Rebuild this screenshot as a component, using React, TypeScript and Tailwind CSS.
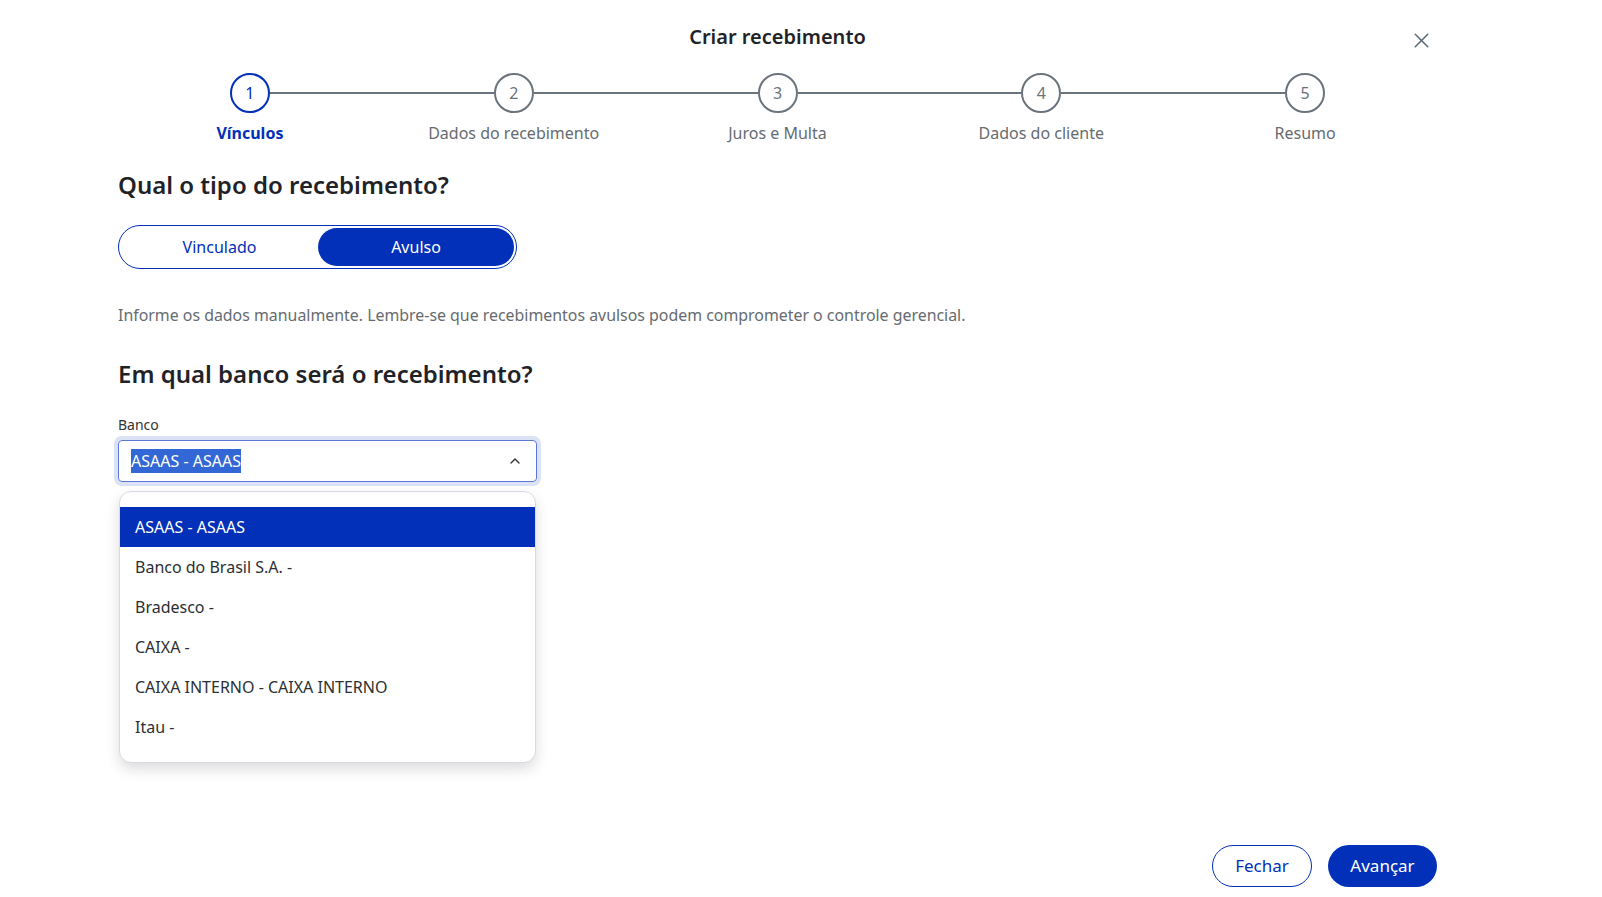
import React from "react";
import { X, ChevronUp } from "lucide-react";

const steps = [
  "Vínculos",
  "Dados do recebimento",
  "Juros e Multa",
  "Dados do cliente",
  "Resumo",
];

const banks = [
  "ASAAS - ASAAS",
  "Banco do Brasil S.A. -",
  "Bradesco -",
  "CAIXA -",
  "CAIXA INTERNO - CAIXA INTERNO",
  "Itau -",
];

function Stepper({ current }: { current: number }) {
  return (
    <div className="grid grid-cols-5 mt-[22px]">
      {steps.map((label, i) => {
        const active = i === current;
        return (
          <div key={label} className="flex flex-col items-center">
            <div className="flex items-center w-full">
              <div
                className={`flex-1 h-[2px] ${i === 0 ? "bg-transparent" : "bg-[#6b737c]"}`}
              />
              <div
                className={`w-[40px] h-[40px] rounded-full border-2 flex items-center justify-center text-[16px] ${
                  active
                    ? "border-[#0230b8] text-[#0230b8]"
                    : "border-[#6b737c] text-[#6b737c]"
                }`}
              >
                {i + 1}
              </div>
              <div
                className={`flex-1 h-[2px] ${
                  i === steps.length - 1 ? "bg-transparent" : "bg-[#6b737c]"
                }`}
              />
            </div>
            <span
              className={`mt-[8px] text-[16px] leading-[24px] ${
                active ? "font-bold text-[#0230b8]" : "text-[#666b70]"
              }`}
            >
              {label}
            </span>
          </div>
        );
      })}
    </div>
  );
}

export default function App() {
  return (
    <div
      className="w-[1602px] h-[897px] bg-white flex flex-col pl-[118px] pr-[165px] text-[#222]"
      style={{ fontFamily: '"Noto Sans", "Open Sans", sans-serif' }}
    >
      <div className="relative flex justify-center pt-[23px]">
        <h1 className="text-[20px] leading-[28px] font-semibold text-[#1f2328]">
          Criar recebimento
        </h1>
        <button className="absolute right-[3px] top-[28px] text-[#5f6b78]">
          <X className="w-[25px] h-[25px]" strokeWidth={1.5} />
        </button>
      </div>

      <Stepper current={0} />

      <h2 className="mt-[24px] text-[24px] leading-[32px] font-semibold text-[#1f2328]">
        Qual o tipo do recebimento?
      </h2>

      <div className="mt-[24px] w-[399px] h-[44px] rounded-full border border-[#0230b8] p-[2px] flex">
        <button className="flex-1 rounded-full text-[16px] text-[#0230b8]">
          Vinculado
        </button>
        <button className="w-[196px] rounded-full bg-[#0230b8] text-[16px] text-white">
          Avulso
        </button>
      </div>

      <p className="mt-[34px] text-[15.9px] leading-[24px] text-[#666b70]">
        Informe os dados manualmente. Lembre-se que recebimentos avulsos podem
        comprometer o controle gerencial.
      </p>

      <h2 className="mt-[31px] text-[24px] leading-[32px] font-semibold text-[#1f2328]">
        Em qual banco será o recebimento?
      </h2>

      <label className="mt-[25px] text-[14px] leading-[20px] text-[#333]">
        Banco
      </label>

      <div className="relative mt-[5px] w-[419px]">
        <div className="h-[42px] rounded-[4px] border border-[#5b78d6] ring-4 ring-[#dbe2f6] flex items-center justify-between pl-[12px] pr-[13px]">
          <span className="text-[16px] leading-[24px] bg-[#3367d6] text-white">
            ASAAS - ASAAS
          </span>
          <ChevronUp className="w-[16px] h-[16px] text-[#333]" strokeWidth={2} />
        </div>

        <ul className="absolute left-[1px] right-[1px] top-[51px] z-10 bg-white rounded-[12px] border border-[#d6dae3] shadow-[0_6px_14px_rgba(0,0,0,0.14)] py-[15px]">
          {banks.map((bank, i) => (
            <li
              key={bank}
              className={`h-[40px] flex items-center pl-[15px] text-[16px] ${
                i === 0 ? "bg-[#0230b8] text-white" : "text-[#2b2f33]"
              }`}
            >
              {bank}
            </li>
          ))}
        </ul>
      </div>

      <div className="mt-auto mb-[10px] flex justify-end gap-[16px]">
        <button className="w-[100px] h-[42px] rounded-full border border-[#0230b8] text-[17px] text-[#0230b8]">
          Fechar
        </button>
        <button className="w-[109px] h-[42px] rounded-full bg-[#0230b8] text-[17px] text-white">
          Avançar
        </button>
      </div>
    </div>
  );
}
